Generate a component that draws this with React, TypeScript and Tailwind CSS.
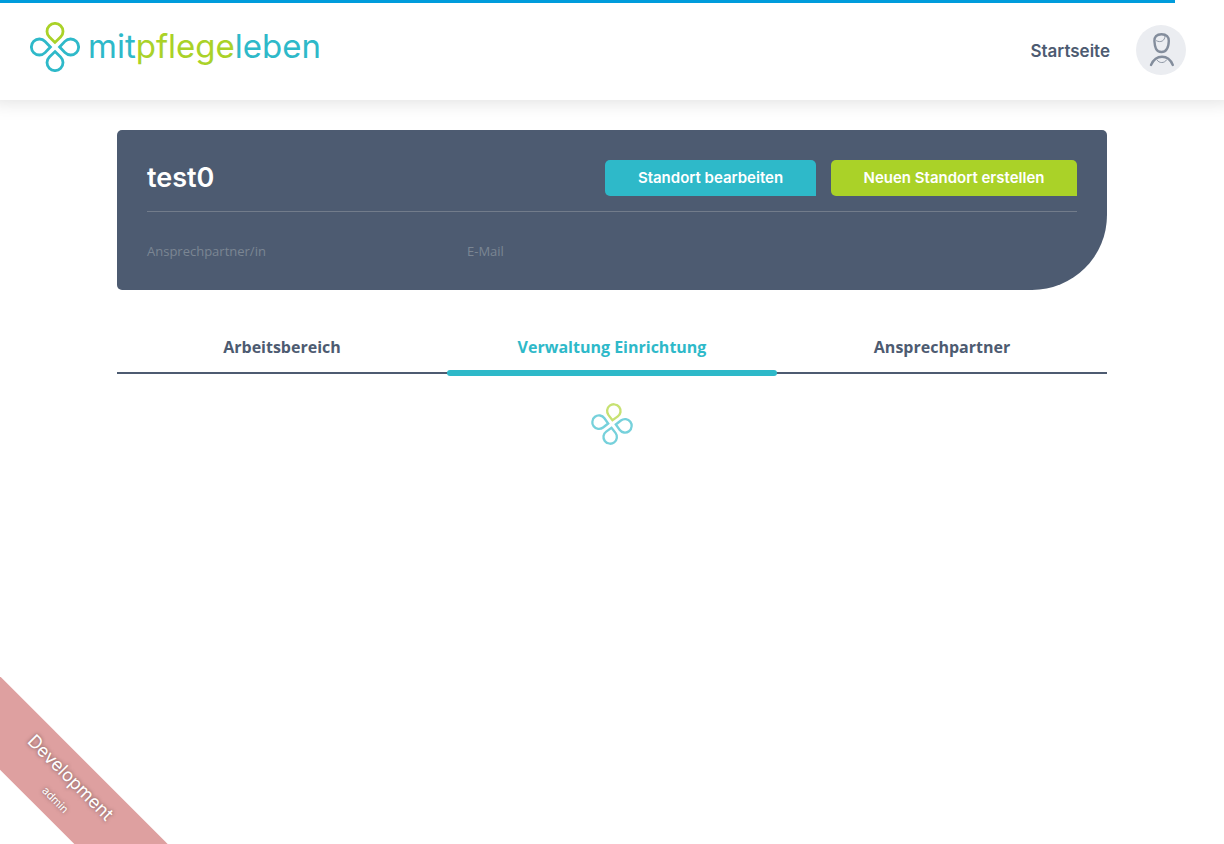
const PETAL = 'M25 20.4 L19.4 15.1 A8 8 0 1 1 30.6 15.1 Z';

function Clover({ className }: { className: string }) {
  return (
    <svg viewBox="0 0 50 50" fill="none" strokeWidth="2.8" className={className} aria-hidden="true">
      <path d={PETAL} stroke="#aad228" />
      <path d={PETAL} stroke="#2eb9c9" transform="rotate(90 25 25)" />
      <path d={PETAL} stroke="#2eb9c9" transform="rotate(180 25 25)" />
      <path d={PETAL} stroke="#2eb9c9" transform="rotate(270 25 25)" />
    </svg>
  );
}

function AvatarIcon() {
  return (
    <svg viewBox="0 0 50 50" fill="none" stroke="#838d9c" strokeLinecap="round" className="size-[50px]" aria-hidden="true">
      <path
        d="M25.5 9.2 C30.5 9.2 33 12 32.8 16 C32.6 22 31.3 27 25.5 27 C19.8 27 18.8 22 18.4 16 C18.2 12 20.5 9.2 25.5 9.2 Z"
        strokeWidth="2.4"
      />
      <path d="M20.5 15.8 C24.5 18 29 16 29 11" strokeWidth="0.9" />
      <path d="M15 40 C17.5 34.5 20.5 31.8 26 31.8 C31.5 31.8 34.5 34.5 36.8 40" strokeWidth="2.4" />
      <path d="M21 35 C23 38.5 28.5 38.5 30.5 35" strokeWidth="0.9" />
    </svg>
  );
}

const tabs = [
  { label: 'Arbeitsbereich', active: false },
  { label: 'Verwaltung Einrichtung', active: true },
  { label: 'Ansprechpartner', active: false },
];

export default function App() {
  return (
    <div className="min-h-screen overflow-x-hidden bg-white font-['Open_Sans',sans-serif] text-[#4d5b71]">
      <div className="fixed top-0 left-0 z-20 h-[3px] w-[96%] bg-[#009cdc]" />

      <header className="flex h-[100px] items-center justify-between pr-[38px] pl-[30px] font-['Inter',sans-serif] shadow-[0_-10px_20px_10px_rgba(0,0,0,0.15)]">
        <a href="#" className="flex items-center gap-2 pb-1.5">
          <Clover className="size-[50px]" />
          <span className="pb-0.5 text-[33px] leading-10 font-normal text-[#2eb9c9]">
            mit<span className="text-[#aad228]">pflege</span>leben
          </span>
        </a>
        <nav className="flex items-center gap-[26px]">
          <a href="#" className="pt-0.5 text-[17px] leading-6 font-semibold">
            Startseite
          </a>
          <button type="button" aria-label="Profil" className="size-[50px] rounded-full bg-[#ebedf1]">
            <AvatarIcon />
          </button>
        </nav>
      </header>

      <main className="mx-auto w-full max-w-[990px] pt-[30px]">
        <section className="rounded-[5px] rounded-br-[75px] bg-[#4d5b71] p-[30px]">
          <div className="flex items-center justify-between border-b border-[#727c8b] pb-[15px] font-['Inter',sans-serif] text-white">
            <h1 className="text-[27px] leading-9 font-semibold">test0</h1>
            <div className="flex gap-[15px] text-[15px] leading-5 font-semibold">
              <button type="button" className="h-9 min-w-[211px] rounded-[5px] rounded-br-none bg-[#2eb9c9] px-5">
                Standort bearbeiten
              </button>
              <button type="button" className="h-9 min-w-[246px] rounded-[5px] rounded-br-none bg-[#aad228] px-5">
                Neuen Standort erstellen
              </button>
            </div>
          </div>
          <dl className="flex gap-[30px] pt-[30px] text-[13px] leading-[18px] text-[#7b8693]">
            <dt className="w-[290px]">Ansprechpartner/in</dt>
            <dt className="w-[290px]">E-Mail</dt>
          </dl>
        </section>

        <nav className="mt-[30px] grid grid-cols-3 border-b-2 border-[#4d5b71] text-center text-base font-bold">
          {tabs.map((tab) => (
            <a
              key={tab.label}
              href="#"
              className={
                tab.active
                  ? 'relative pt-4 pb-3.5 leading-[22px] text-[#2eb9c9] after:absolute after:inset-x-0 after:-bottom-1 after:h-1.5 after:rounded-[3px] after:bg-[#2eb9c9]'
                  : 'pt-4 pb-3.5 leading-[22px]'
              }
            >
              {tab.label}
            </a>
          ))}
        </nav>

        <div className="flex justify-center pt-[29px]" role="status" aria-label="Laden">
          <Clover className="size-[42px] rotate-[8deg] opacity-65" />
        </div>
      </main>

      <div className="pointer-events-none fixed bottom-0 left-0 size-[168px] overflow-hidden">
        <div className="absolute bottom-6 -left-[86px] flex h-[66px] w-[300px] rotate-45 flex-col items-center justify-center gap-1.5 bg-[#dea0a0] font-['Inter',sans-serif] text-white text-shadow-[0_0_4px_rgba(0,0,0,0.5)]">
          <span className="pr-1 text-lg leading-6">Development</span>
          <span className="pl-1.5 text-[11px] leading-4">admin</span>
        </div>
      </div>
    </div>
  );
}
